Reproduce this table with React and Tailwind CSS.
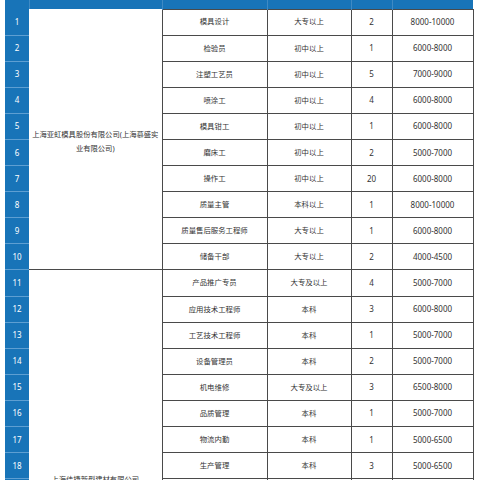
import React from 'react';

const groupA = {
  name: '上海亚虹模具股份有限公司(上海慕盛实',
  name2: '业有限公司)',
  rows: [
    ['模具设计', '大专以上', '2', '8000-10000'],
    ['检验员', '初中以上', '1', '6000-8000'],
    ['注塑工艺员', '初中以上', '5', '7000-9000'],
    ['喷涂工', '初中以上', '4', '6000-8000'],
    ['模具钳工', '初中以上', '1', '6000-8000'],
    ['磨床工', '初中以上', '2', '5000-7000'],
    ['操作工', '初中以上', '20', '6000-8000'],
    ['质量主管', '本科以上', '1', '8000-10000'],
    ['质量售后服务工程师', '大专以上', '1', '6000-8000'],
    ['储备干部', '大专以上', '2', '4000-4500'],
  ],
};

const groupB = {
  name: '上海佳捷新型建材有限公司',
  rows: [
    ['产品推广专员', '大专及以上', '4', '5000-7000'],
    ['应用技术工程师', '本科', '3', '6000-8000'],
    ['工艺技术工程师', '本科', '1', '5000-7000'],
    ['设备管理员', '本科', '2', '5000-7000'],
    ['机电维修', '大专及以上', '3', '6500-8000'],
    ['品质管理', '本科', '1', '5000-7000'],
    ['物流内勤', '本科', '1', '5000-6500'],
    ['生产管理', '本科', '3', '5000-6500'],
    ['销售代表', '大专及以上', '5', '5000-8000'],
    ['仓库管理员', '大专及以上', '1', '4500-5500'],
    ['财务会计', '本科', '1', '5000-6500'],
    ['行政专员', '大专及以上', '1', '4500-5500'],
    ['采购专员', '大专及以上', '1', '5000-6000'],
    ['安全专员', '大专及以上', '1', '5000-6500'],
    ['质检员', '大专及以上', '2', '4500-5500'],
    ['操作工', '初中以上', '10', '5000-6500'],
  ],
};

const font = { fontFamily: '"Noto Sans", "Noto Sans CJK SC", sans-serif' };

function NumCell({ n }) {
  return (
    <td className="bg-[#1874b8] text-white text-[8px] text-center border-b border-b-[#5e9fd2] border-l-0 p-0">
      {n}
    </td>
  );
}

function DataCells({ r }) {
  return (
    <>
      <td className="border border-[#4a4a4a] text-center text-[7.4px] text-[#333] p-0 whitespace-nowrap">{r[0]}</td>
      <td className="border border-[#4a4a4a] text-center text-[7.4px] text-[#333] p-0">{r[1]}</td>
      <td className="border border-[#4a4a4a] text-center text-[8px] text-[#333] p-0">{r[2]}</td>
      <td className="border border-[#4a4a4a] text-center text-[8px] text-[#333] p-0">{r[3]}</td>
    </>
  );
}

export default function App() {
  let n = 0;
  return (
    <div className="w-[480px] h-[480px] overflow-hidden bg-white pl-[5px]" style={font}>
      <table className="table-fixed border-collapse w-[468px]">
        <colgroup>
          <col className="w-[24px]" />
          <col className="w-[133px]" />
          <col className="w-[105px]" />
          <col className="w-[84px]" />
          <col className="w-[41px]" />
          <col className="w-[81px]" />
        </colgroup>
        <tbody>
          <tr className="h-[9px]">
            <td className="bg-[#1874b8] p-0 border-r border-r-[#3f8ac4]"></td>
            <td className="bg-[#1874b8] p-0 border-r border-r-[#3f8ac4]"></td>
            <td className="bg-[#1874b8] p-0 border-r border-r-[#3f8ac4]"></td>
            <td className="bg-[#1874b8] p-0 border-r border-r-[#3f8ac4]"></td>
            <td className="bg-[#1874b8] p-0 border-r border-r-[#3f8ac4]"></td>
            <td className="bg-[#1874b8] p-0"></td>
          </tr>
          {groupA.rows.map((r, i) => {
            n += 1;
            return (
              <tr key={'a' + i} className="h-[26.1px]">
                <NumCell n={n} />
                {i === 0 && (
                  <td
                    rowSpan={groupA.rows.length}
                    className="border border-[#4a4a4a] border-l-0 border-t-0 text-center text-[7.3px] leading-[14px] text-[#333] px-[1px] pt-[3px] align-middle"
                  >
                    {groupA.name}
                    <br />
                    {groupA.name2}
                  </td>
                )}
                <DataCells r={r} />
              </tr>
            );
          })}
          {groupB.rows.map((r, i) => {
            n += 1;
            return (
              <tr key={'b' + i} className="h-[26.1px]">
                <NumCell n={n} />
                {i === 0 && (
                  <td
                    rowSpan={groupB.rows.length}
                    className="border border-[#4a4a4a] border-l-0 text-center text-[7.3px] leading-[14px] text-[#333] px-[1px] align-middle"
                  >
                    {groupB.name}
                  </td>
                )}
                <DataCells r={r} />
              </tr>
            );
          })}
        </tbody>
      </table>
    </div>
  );
}
